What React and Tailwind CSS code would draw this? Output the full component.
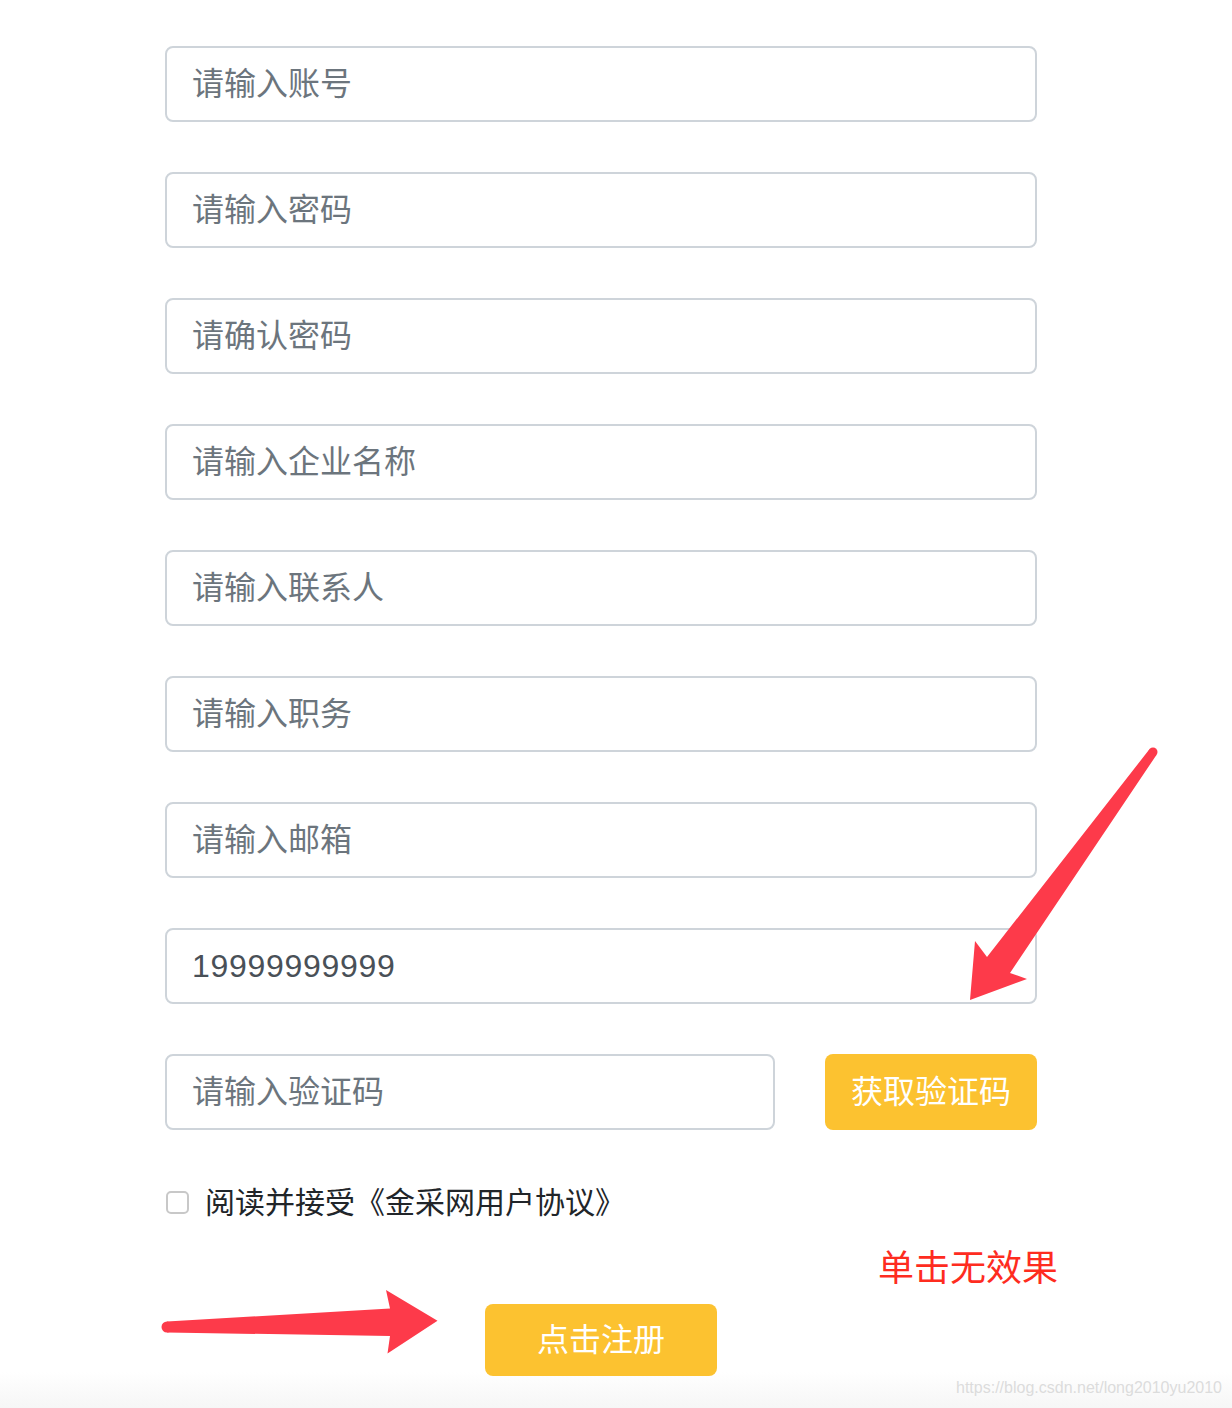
import React from 'react';

const FIELDS = [
  { placeholder: '请输入账号' },
  { placeholder: '请输入密码' },
  { placeholder: '请确认密码' },
  { placeholder: '请输入企业名称' },
  { placeholder: '请输入联系人' },
  { placeholder: '请输入职务' },
  { placeholder: '请输入邮箱' },
  { placeholder: '请输入手机号', value: '19999999999' },
];

const font = { fontFamily: '"Liberation Sans", "Noto Sans CJK SC", sans-serif' };

const inputCls =
  'h-[76px] rounded-[8px] border-2 border-[#ced4da] bg-white px-[25px] text-[32px] text-[#495057] outline-none placeholder:text-[#6c757d]';

function Arrows() {
  // red annotation arrows drawn over the form
  return (
    <svg className="pointer-events-none absolute left-0 top-0" width="1232" height="1408">
      <g fill="#fd3a4a">
        <circle cx="1153" cy="752" r="4.5" />
        <polygon points="1149.4,749.3 987,957 975,941 970,1000 1027,979 1010,973 1156.6,754.7" />
        <circle cx="167" cy="1327" r="5.5" />
        <polygon points="167,1321.5 390,1308.5 386,1290 437.5,1320.7 387.5,1353.5 390,1336 167,1332.5" />
      </g>
    </svg>
  );
}

export default function App() {
  return (
    <div className="relative h-[1408px] w-[1232px] overflow-hidden bg-white" style={font}>
      {/* faint watermark band at the bottom */}
      <div className="absolute bottom-0 left-0 h-[36px] w-full bg-gradient-to-b from-white to-[#f6f6f6]" />

      <div className="relative pl-[165px] pt-[46px]">
        <div className="flex w-[872px] flex-col gap-[50px]">
          {FIELDS.map((f) => (
            <input
              key={f.placeholder}
              className={inputCls + (f.value ? ' tracking-[0.7px]' : '')}
              style={font}
              placeholder={f.placeholder}
              defaultValue={f.value}
            />
          ))}
          <div className="flex items-center justify-between">
            <input className={inputCls + ' w-[610px]'} style={font} placeholder="请输入验证码" />
            <button
              className="h-[76px] w-[212px] rounded-[8px] bg-[#fcc230] text-[32px] text-white"
              style={font}
            >
              获取验证码
            </button>
          </div>
        </div>

        <label className="mt-[52px] flex h-[40px] items-center">
          <span className="ml-[1px] h-[23px] w-[23px] rounded-[5px] border-2 border-[#c8c8c8] bg-white" />
          <span className="ml-[16px] text-[30px] text-[#212529]">阅读并接受《金采网用户协议》</span>
        </label>

        <div className="mt-[27px] h-[40px] pl-[713px] text-[36px] leading-[40px] text-[#fe2c1f]">
          单击无效果
        </div>

        <div className="mt-[15px] flex w-[872px] justify-center">
          <button
            className="h-[72px] w-[232px] rounded-[8px] bg-[#fcc230] text-[32px] text-white"
            style={font}
          >
            点击注册
          </button>
        </div>
      </div>

      <Arrows />

      <div className="absolute bottom-[8px] right-[10px] text-[16px] text-[#dcdcdc]">
        https://blog.csdn.net/long2010yu2010
      </div>
    </div>
  );
}
